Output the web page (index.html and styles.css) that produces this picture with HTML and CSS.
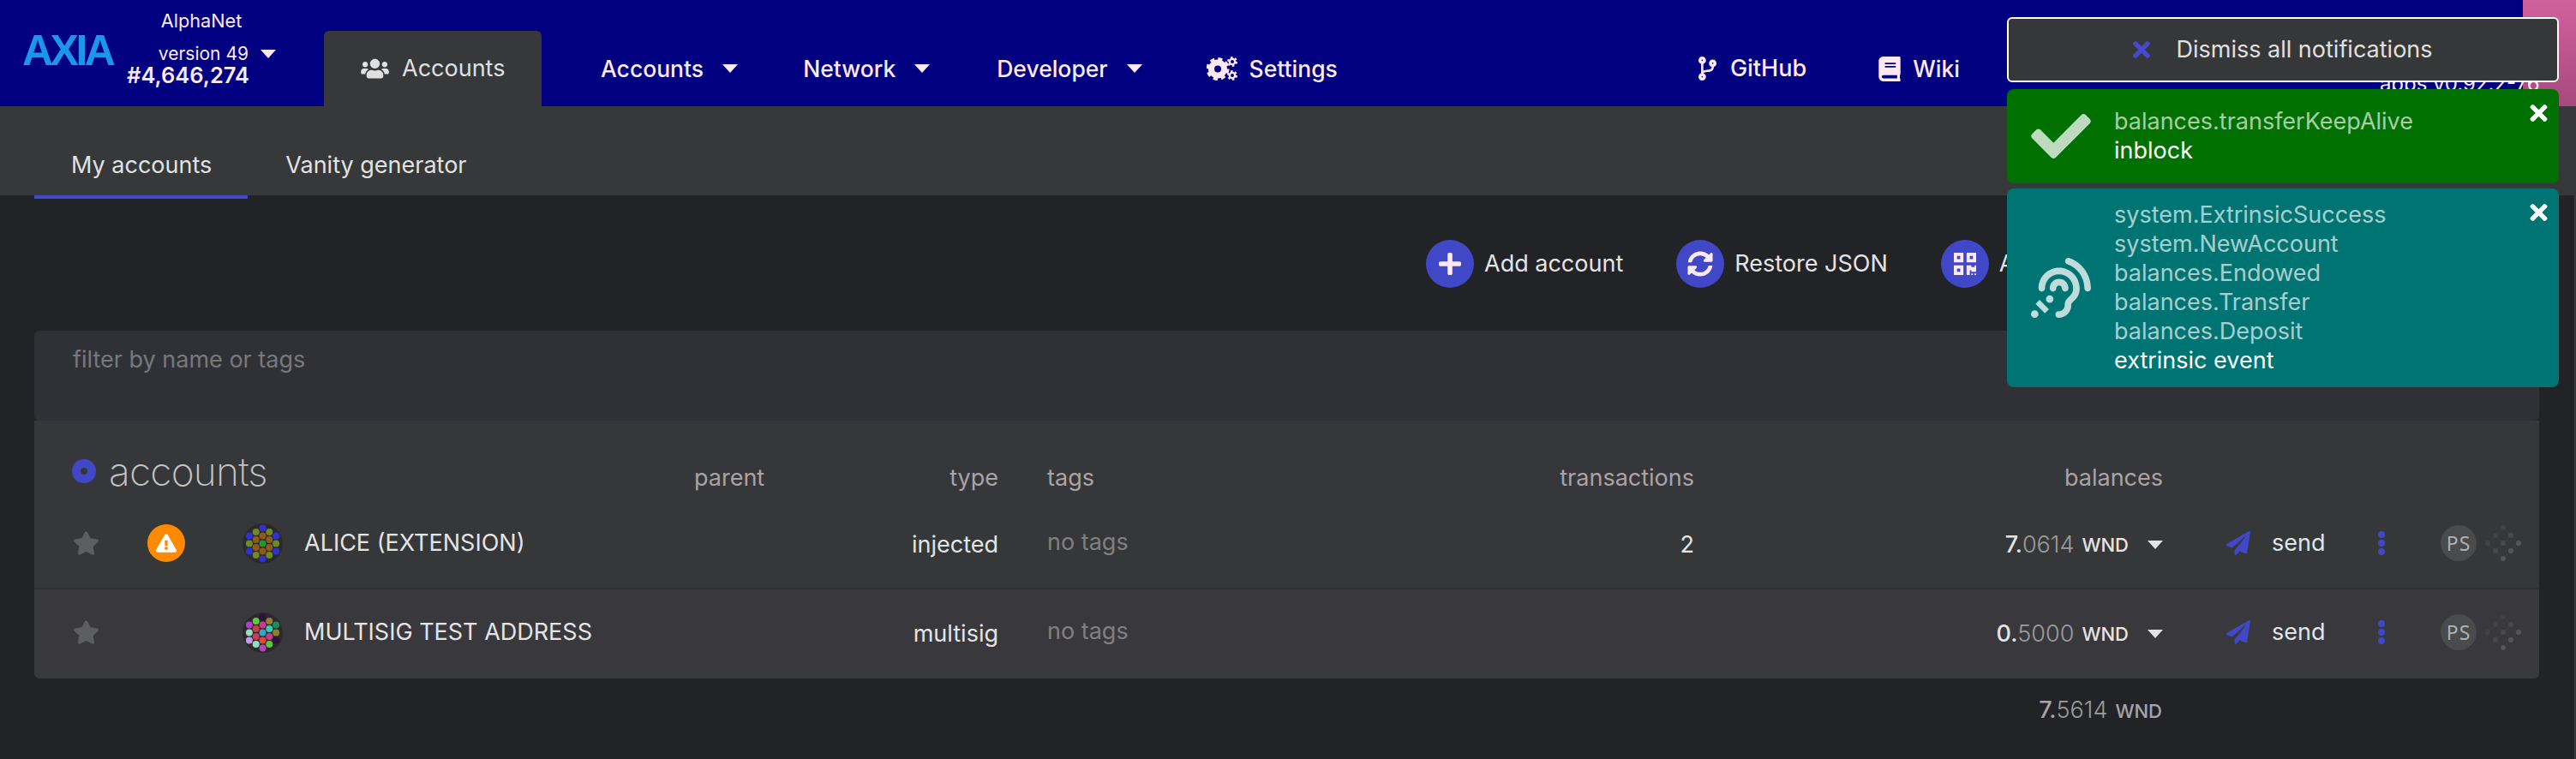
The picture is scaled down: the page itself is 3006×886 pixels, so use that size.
FILE: index.html
```html
<!DOCTYPE html>
<html lang="en">
<head>
    <meta charset="UTF-8">
    <title>Accounts</title>
    <link rel="stylesheet" href="styles.css">
</head>
<body>
    <div class="header">
        <div class="logo">AXIA</div>
        <div class="chain">
            <div class="chain-name">AlphaNet</div>
            <div class="chain-version">version 49 <span class="caret caret-chain"></span></div>
            <div class="chain-block">#4,646,274</div>
        </div>
        <div class="nav">
            <div class="nav-tab">
                <svg class="icon-users" viewBox="0 0 640 512"><path d="M96 224c35.3 0 64-28.7 64-64s-28.7-64-64-64-64 28.7-64 64 28.7 64 64 64zm448 0c35.3 0 64-28.7 64-64s-28.7-64-64-64-64 28.7-64 64 28.7 64 64 64zm32 32h-64c-17.6 0-33.5 7.1-45.1 18.6 40.3 22.1 68.9 62 75.1 109.4h66c17.7 0 32-14.3 32-32v-32c0-35.3-28.7-64-64-64zm-256 0c61.9 0 112-50.1 112-112S381.9 32 320 32 208 82.1 208 144s50.1 112 112 112zm76.8 32h-8.3c-20.8 10-43.9 16-68.5 16s-47.6-6-68.5-16h-8.3C179.6 288 128 339.6 128 403.2V432c0 26.5 21.5 48 48 48h288c26.5 0 48-21.5 48-48v-28.8c0-63.6-51.6-115.2-115.2-115.2zm-223.7-13.4C161.5 263.1 145.6 256 128 256H64c-35.3 0-64 28.7-64 64v32c0 17.7 14.3 32 32 32h65.9c6.3-47.4 34.9-87.3 75.2-109.4z"/></svg>
                Accounts
            </div>
            <div class="nav-item nav-first">Accounts <span class="caret"></span></div>
            <div class="nav-item">Network <span class="caret"></span></div>
            <div class="nav-item nav-developer">Developer <span class="caret"></span></div>
            <div class="nav-item nav-settings">
                <svg class="icon-cogs" viewBox="0 0 36 28">
                    <circle class="cog-body" cx="13" cy="14.5" r="7.5"/>
                    <circle class="cog-teeth" cx="13" cy="14.5" r="11.5"/>
                    <circle class="cog-small" cx="30" cy="6" r="3.2"/>
                    <circle class="cog-small-teeth" cx="30" cy="6" r="5"/>
                    <circle class="cog-small" cx="30" cy="22" r="3.2"/>
                    <circle class="cog-small-teeth" cx="30" cy="22" r="5"/>
                </svg>
                Settings
            </div>
            <div class="nav-item nav-github">
                <svg class="icon-branch" viewBox="0 0 384 512"><path d="M384 144c0-44.2-35.8-80-80-80s-80 35.8-80 80c0 36.4 24.3 67.1 57.5 76.8-.6 16.1-4.2 28.5-11 36.9-15.4 19.2-49.3 22.4-85.2 25.7-28.2 2.6-57.4 5.4-81.3 16.9v-144c32.5-10.2 56-40.5 56-76.3 0-44.2-35.8-80-80-80S0 35.8 0 80c0 35.8 23.5 66.1 56 76.3v199.3C23.5 365.9 0 396.2 0 432c0 44.2 35.8 80 80 80s80-35.8 80-80c0-34-21.2-63.1-51.2-74.6 3.1-5.2 7.8-9.8 14.9-13.4 16.2-8.2 40.4-10.4 66.1-12.8 42.2-3.9 90-8.4 118.2-43.4 14-17.4 21.1-39.8 21.6-67.9 31.6-10.8 54.4-40.7 54.4-75.9zM80 64c8.8 0 16 7.2 16 16s-7.2 16-16 16-16-7.2-16-16 7.2-16 16-16zm0 384c-8.8 0-16-7.2-16-16s7.2-16 16-16 16 7.2 16 16-7.2 16-16 16zm224-320c8.8 0 16 7.2 16 16s-7.2 16-16 16-16-7.2-16-16 7.2-16 16-16z"/></svg>
                GitHub
            </div>
            <div class="nav-item nav-wiki">
                <svg class="icon-book" viewBox="0 0 448 512"><path d="M448 360V24c0-13.3-10.7-24-24-24H96C43 0 0 43 0 96v320c0 53 43 96 96 96h328c13.3 0 24-10.7 24-24v-16c0-7.5-3.5-14.3-8.9-18.7-4.2-15.4-4.2-59.3 0-74.7 5.4-4.3 8.9-11.1 8.9-18.6zM128 134c0-3.3 2.7-6 6-6h212c3.3 0 6 2.7 6 6v20c0 3.3-2.7 6-6 6H134c-3.3 0-6-2.7-6-6v-20zm0 64c0-3.3 2.7-6 6-6h212c3.3 0 6 2.7 6 6v20c0 3.3-2.7 6-6 6H134c-3.3 0-6-2.7-6-6v-20zm253.4 250H96c-17.7 0-32-14.3-32-32 0-17.6 14.4-32 32-32h285.4c-1.9 17.1-1.9 46.9 0 64z"/></svg>
                Wiki
            </div>
            <div class="app-version">apps v0.92.2-76</div>
        </div>
        <div class="header-corner"></div>
    </div>

    <div class="subnav">
        <div class="subnav-tab subnav-active">My accounts</div>
        <div class="subnav-tab">Vanity generator</div>
    </div>

    <div class="content">
        <div class="actions">
            <div class="action">
                <span class="action-circle"><svg class="icon-plus" viewBox="0 0 448 512"><path d="M416 208H272V64c0-17.67-14.33-32-32-32h-32c-17.67 0-32 14.33-32 32v144H32c-17.67 0-32 14.33-32 32v32c0 17.67 14.33 32 32 32h144v144c0 17.67 14.33 32 32 32h32c17.67 0 32-14.33 32-32V304h144c17.67 0 32-14.33 32-32v-32c0-17.67-14.33-32-32-32z"/></svg></span>
                Add account
            </div>
            <div class="action">
                <span class="action-circle"><svg class="icon-sync" viewBox="0 0 512 512"><path d="M370.72 133.28C339.458 104.008 298.888 87.962 255.848 88c-77.458.068-144.328 53.178-162.791 126.85-1.344 5.363-6.122 9.15-11.651 9.15H24.103c-7.498 0-13.194-6.807-11.807-14.176C33.933 94.924 134.813 8 256 8c66.448 0 126.791 26.136 171.315 68.685L463.03 40.97C478.149 25.851 504 36.559 504 57.941V192c0 13.255-10.745 24-24 24H345.941c-21.382 0-32.09-25.851-16.971-40.971l41.75-41.749zM32 296h134.059c21.382 0 32.09 25.851 16.971 40.971l-41.75 41.75c31.262 29.273 71.835 45.319 114.876 45.28 77.418-.07 144.315-53.144 162.787-126.849 1.344-5.363 6.122-9.15 11.651-9.15h57.304c7.498 0 13.194 6.807 11.807 14.176C478.067 417.076 377.187 504 256 504c-66.448 0-126.791-26.136-171.315-68.685L48.97 471.03C33.851 486.149 8 475.441 8 454.059V320c0-13.255 10.745-24 24-24z"/></svg></span>
                Restore JSON
            </div>
            <div class="action">
                <span class="action-circle"><svg class="icon-qr" viewBox="0 0 448 512"><path d="M0 224h192V32H0v192zM64 96h64v64H64V96zm192-64v192h192V32H256zm128 128h-64V96h64v64zM0 480h192V288H0v192zm64-128h64v64H64v-64zm352-64h32v128h-96v-32h-32v96h-64V288h96v32h64v-32zm0 160h32v32h-32v-32zm-64 0h32v32h-32v-32z"/></svg></span>
                Add via Qr
            </div>
        </div>

        <div class="filter">filter by name or tags</div>

        <div class="table">
            <div class="row row-head">
                <div class="head-title"><span class="head-ring"></span>accounts</div>
                <div class="col-parent">parent</div>
                <div class="col-type">type</div>
                <div class="col-tags">tags</div>
                <div class="col-tx">transactions</div>
                <div class="col-balance">balances</div>
            </div>

            <div class="row row-account">
                <div class="col-star"><svg class="icon-star" viewBox="0 0 576 512"><path d="M259.3 17.8L194 150.2 47.9 171.5c-26.2 3.8-36.7 36.1-17.7 54.6l105.7 103-25 145.5c-4.5 26.3 23.2 46 46.4 33.7L288 439.6l130.7 68.7c23.2 12.2 50.9-7.4 46.4-33.7l-25-145.5 105.7-103c19-18.5 8.5-50.8-17.7-54.6L382 150.2 316.7 17.8c-11.7-23.6-45.6-23.9-57.4 0z"/></svg></div>
                <div class="col-warn">
                    <span class="warn-badge"><svg class="icon-warn" viewBox="0 0 576 512"><path d="M569.517 440.013C587.975 472.007 564.806 512 527.94 512H48.054c-36.937 0-59.999-40.055-41.577-71.987L246.423 23.985c18.467-32.009 64.72-31.951 83.154 0l239.94 416.028zM288 354c-25.405 0-46 20.595-46 46s20.595 46 46 46 46-20.595 46-46-20.595-46-46-46zm-43.673-165.346l7.418 136c.347 6.364 5.609 11.346 11.982 11.346h48.546c6.373 0 11.635-4.982 11.982-11.346l7.418-136c.375-6.874-5.098-12.654-11.982-12.654h-63.383c-6.884 0-12.356 5.78-11.981 12.654z"/></svg></span>
                </div>
                <div class="col-name">
                    <svg class="identicon" viewBox="-23.5 -23.5 47 47">
                        <circle class="identicon-bg" r="23.5"/>
                        <circle cx="0" cy="-18" r="4" fill="#3030d8"/>
                        <circle cx="-7.8" cy="-13.5" r="4" fill="#6f8a1e"/>
                        <circle cx="7.8" cy="-13.5" r="4" fill="#6f8a1e"/>
                        <circle cx="-15.6" cy="-9" r="4" fill="#3030d8"/>
                        <circle cx="0" cy="-9" r="4" fill="#8f5a1c"/>
                        <circle cx="15.6" cy="-9" r="4" fill="#3030d8"/>
                        <circle cx="-7.8" cy="-4.5" r="4" fill="#8f5a1c"/>
                        <circle cx="7.8" cy="-4.5" r="4" fill="#8f5a1c"/>
                        <circle cx="-15.6" cy="0" r="4" fill="#6f8a1e"/>
                        <circle cx="0" cy="0" r="4" fill="#1f9a1e"/>
                        <circle cx="15.6" cy="0" r="4" fill="#6f8a1e"/>
                        <circle cx="-7.8" cy="4.5" r="4" fill="#8f5a1c"/>
                        <circle cx="7.8" cy="4.5" r="4" fill="#8f5a1c"/>
                        <circle cx="-15.6" cy="9" r="4" fill="#3030d8"/>
                        <circle cx="0" cy="9" r="4" fill="#8f5a1c"/>
                        <circle cx="15.6" cy="9" r="4" fill="#3030d8"/>
                        <circle cx="-7.8" cy="13.5" r="4" fill="#6f8a1e"/>
                        <circle cx="7.8" cy="13.5" r="4" fill="#6f8a1e"/>
                        <circle cx="0" cy="18" r="4" fill="#3030d8"/>
                    </svg>
                    ALICE (EXTENSION)
                </div>
                <div class="col-parent"></div>
                <div class="col-type">injected</div>
                <div class="col-tags no-tags">no tags</div>
                <div class="col-tx">2</div>
                <div class="col-balance">
                    <span class="bal-int">7.</span><span class="bal-dec">0614</span><span class="bal-unit">WND</span><span class="caret caret-bal"></span>
                </div>
                <div class="col-send">
                    <svg class="icon-send" viewBox="0 0 512 512"><path d="M476 3.2L12.5 270.6c-18.1 10.4-15.8 35.6 2.2 43.2L121 358.4l287.3-253.2c5.5-4.9 13.3 2.6 8.6 8.3L176 407v80.5c0 23.6 28.5 32.9 42.5 15.8L282 426l124.6 52.2c14.2 6 30.4-2.9 33-18.2l72-432C515 7.8 493.3-6.8 476 3.2z"/></svg>
                    send
                </div>
                <div class="col-more"><span></span><span></span><span></span></div>
                <div class="col-end">
                    <span class="ps-badge">PS</span>
                    <svg class="diamond" viewBox="-22 -22 44 44">
                        <path d="M0-18L18 0M-9-9L9 9M-18 0L0 18M0-18L-18 0M9-9L-9 9M18 0L0 18"/>
                        <circle cx="0" cy="-18" r="3" class="dim"/>
                        <circle cx="-9" cy="-9" r="3" class="dim"/>
                        <circle cx="9" cy="-9" r="3"/>
                        <circle cx="-18" cy="0" r="3" class="dim"/>
                        <circle cx="0" cy="0" r="3"/>
                        <circle cx="18" cy="0" r="3" class="lit"/>
                        <circle cx="-9" cy="9" r="3"/>
                        <circle cx="9" cy="9" r="3" class="lit"/>
                        <circle cx="0" cy="18" r="3" class="lit"/>
                    </svg>
                </div>
            </div>

            <div class="row row-account row-alt">
                <div class="col-star"><svg class="icon-star" viewBox="0 0 576 512"><path d="M259.3 17.8L194 150.2 47.9 171.5c-26.2 3.8-36.7 36.1-17.7 54.6l105.7 103-25 145.5c-4.5 26.3 23.2 46 46.4 33.7L288 439.6l130.7 68.7c23.2 12.2 50.9-7.4 46.4-33.7l-25-145.5 105.7-103c19-18.5 8.5-50.8-17.7-54.6L382 150.2 316.7 17.8c-11.7-23.6-45.6-23.9-57.4 0z"/></svg></div>
                <div class="col-warn"></div>
                <div class="col-name">
                    <svg class="identicon" viewBox="-23.5 -23.5 47 47">
                        <circle class="identicon-bg" r="23.5"/>
                        <circle cx="0" cy="-18" r="4" fill="#2e0f3e"/>
                        <circle cx="-7.8" cy="-13.5" r="4" fill="#55d03a"/>
                        <circle cx="7.8" cy="-13.5" r="4" fill="#94802a"/>
                        <circle cx="-15.6" cy="-9" r="4" fill="#b33cc8"/>
                        <circle cx="0" cy="-9" r="4" fill="#c93a90"/>
                        <circle cx="15.6" cy="-9" r="4" fill="#1f8a5c"/>
                        <circle cx="-7.8" cy="-4.5" r="4" fill="#d03c3c"/>
                        <circle cx="7.8" cy="-4.5" r="4" fill="#2fd0b8"/>
                        <circle cx="-15.6" cy="0" r="4" fill="#8fe0c0"/>
                        <circle cx="0" cy="0" r="4" fill="#2ea8c8"/>
                        <circle cx="15.6" cy="0" r="4" fill="#8f7f2a"/>
                        <circle cx="-7.8" cy="4.5" r="4" fill="#d03860"/>
                        <circle cx="7.8" cy="4.5" r="4" fill="#c93a90"/>
                        <circle cx="-15.6" cy="9" r="4" fill="#c898e0"/>
                        <circle cx="0" cy="9" r="4" fill="#d84a3a"/>
                        <circle cx="15.6" cy="9" r="4" fill="#2e0f3e"/>
                        <circle cx="-7.8" cy="13.5" r="4" fill="#8fe0c0"/>
                        <circle cx="7.8" cy="13.5" r="4" fill="#50d030"/>
                        <circle cx="0" cy="18" r="4" fill="#c03cc8"/>
                    </svg>
                    MULTISIG TEST ADDRESS
                </div>
                <div class="col-parent"></div>
                <div class="col-type">multisig</div>
                <div class="col-tags no-tags">no tags</div>
                <div class="col-tx"></div>
                <div class="col-balance">
                    <span class="bal-int">0.</span><span class="bal-dec">5000</span><span class="bal-unit">WND</span><span class="caret caret-bal"></span>
                </div>
                <div class="col-send">
                    <svg class="icon-send" viewBox="0 0 512 512"><path d="M476 3.2L12.5 270.6c-18.1 10.4-15.8 35.6 2.2 43.2L121 358.4l287.3-253.2c5.5-4.9 13.3 2.6 8.6 8.3L176 407v80.5c0 23.6 28.5 32.9 42.5 15.8L282 426l124.6 52.2c14.2 6 30.4-2.9 33-18.2l72-432C515 7.8 493.3-6.8 476 3.2z"/></svg>
                    send
                </div>
                <div class="col-more"><span></span><span></span><span></span></div>
                <div class="col-end">
                    <span class="ps-badge">PS</span>
                    <svg class="diamond" viewBox="-22 -22 44 44">
                        <path d="M0-18L18 0M-9-9L9 9M-18 0L0 18M0-18L-18 0M9-9L-9 9M18 0L0 18"/>
                        <circle cx="0" cy="-18" r="3" class="dim"/>
                        <circle cx="-9" cy="-9" r="3" class="dim"/>
                        <circle cx="9" cy="-9" r="3"/>
                        <circle cx="-18" cy="0" r="3" class="dim"/>
                        <circle cx="0" cy="0" r="3"/>
                        <circle cx="18" cy="0" r="3" class="lit"/>
                        <circle cx="-9" cy="9" r="3"/>
                        <circle cx="9" cy="9" r="3" class="lit"/>
                        <circle cx="0" cy="18" r="3" class="lit"/>
                    </svg>
                </div>
            </div>
        </div>

        <div class="total">
            <span class="bal-int">7.</span><span class="bal-dec">5614</span><span class="bal-unit">WND</span>
        </div>
    </div>

    <div class="notifications">
        <div class="dismiss">
            <svg class="icon-dismiss" viewBox="0 80 352 352"><path d="M242.72 256l100.07-100.07c12.28-12.28 12.28-32.19 0-44.48l-22.24-22.24c-12.28-12.28-32.19-12.28-44.48 0L176 189.28 75.93 89.21c-12.28-12.28-32.19-12.28-44.48 0L9.21 111.45c-12.28 12.28-12.28 32.19 0 44.48L109.28 256 9.21 356.07c-12.28 12.28-12.28 32.19 0 44.48l22.24 22.24c12.28 12.28 32.2 12.28 44.48 0L176 322.72l100.07 100.07c12.28 12.28 32.2 12.28 44.48 0l22.24-22.24c12.28-12.28 12.28-32.19 0-44.48L242.72 256z"/></svg>
            Dismiss all notifications
        </div>
        <div class="notice notice-green">
            <svg class="notice-icon" viewBox="0 50 512 412"><path d="M173.898 439.404l-166.4-166.4c-9.997-9.997-9.997-26.206 0-36.204l36.203-36.204c9.997-9.998 26.207-9.998 36.204 0L192 312.69 432.095 72.596c9.997-9.997 26.207-9.997 36.204 0l36.203 36.204c9.997 9.997 9.997 26.206 0 36.204l-294.4 294.401c-9.998 9.997-26.207 9.997-36.204-.001z"/></svg>
            <div class="notice-text">
                <div class="notice-line">balances.transferKeepAlive</div>
                <div>inblock</div>
            </div>
            <svg class="notice-close" viewBox="0 80 352 352"><path d="M242.72 256l100.07-100.07c12.28-12.28 12.28-32.19 0-44.48l-22.24-22.24c-12.28-12.28-32.19-12.28-44.48 0L176 189.28 75.93 89.21c-12.28-12.28-32.19-12.28-44.48 0L9.21 111.45c-12.28 12.28-12.28 32.19 0 44.48L109.28 256 9.21 356.07c-12.28 12.28-12.28 32.19 0 44.48l22.24 22.24c12.28 12.28 32.2 12.28 44.48 0L176 322.72l100.07 100.07c12.28 12.28 32.2 12.28 44.48 0l22.24-22.24c12.28-12.28 12.28-32.19 0-44.48L242.72 256z"/></svg>
        </div>
        <div class="notice notice-teal">
            <svg class="notice-icon" viewBox="0 0 512 512"><path d="M216 260c0 15.464-12.536 28-28 28s-28-12.536-28-28c0-44.112 35.888-80 80-80s80 35.888 80 80c0 15.464-12.536 28-28 28s-28-12.536-28-28c0-13.234-10.767-24-24-24s-24 10.766-24 24zm24-176c-97.047 0-176 78.953-176 176 0 15.464 12.536 28 28 28s28-12.536 28-28c0-66.168 53.832-120 120-120s120 53.832 120 120c0 75.164-71.009 70.311-71.997 143.622L288 404c0 28.673-23.327 52-52 52-15.464 0-28 12.536-28 28s12.536 28 28 28c59.475 0 107.876-48.328 108-107.774.595-34.428 72-48.24 72-144.226 0-97.047-78.953-176-176-176zm-80 236c-17.673 0-32 14.327-32 32s14.327 32 32 32 32-14.327 32-32-14.327-32-32-32zM32 448c-17.673 0-32 14.327-32 32s14.327 32 32 32 32-14.327 32-32-14.327-32-32-32zm480-187.993c0-1.518-.012-3.025-.045-4.531C510.076 140.525 436.157 38.47 327.994 1.511c-14.633-4.998-30.549 2.809-35.55 17.442-5 14.633 2.81 30.549 17.442 35.55 85.906 29.354 144.61 110.513 146.077 201.953.016.782.037 1.799.037 2.542 0 15.464 12.536 28 28 28s28-12.536 28-28zM152.971 439.029l-80-80L39.03 392.97l80 80 33.941-33.941z"/></svg>
            <div class="notice-text">
                <div class="notice-line">system.ExtrinsicSuccess</div>
                <div class="notice-line">system.NewAccount</div>
                <div class="notice-line">balances.Endowed</div>
                <div class="notice-line">balances.Transfer</div>
                <div class="notice-line">balances.Deposit</div>
                <div>extrinsic event</div>
            </div>
            <svg class="notice-close" viewBox="0 80 352 352"><path d="M242.72 256l100.07-100.07c12.28-12.28 12.28-32.19 0-44.48l-22.24-22.24c-12.28-12.28-32.19-12.28-44.48 0L176 189.28 75.93 89.21c-12.28-12.28-32.19-12.28-44.48 0L9.21 111.45c-12.28 12.28-12.28 32.19 0 44.48L109.28 256 9.21 356.07c-12.28 12.28-12.28 32.19 0 44.48l22.24 22.24c12.28 12.28 32.2 12.28 44.48 0L176 322.72l100.07 100.07c12.28 12.28 32.2 12.28 44.48 0l22.24-22.24c12.28-12.28 12.28-32.19 0-44.48L242.72 256z"/></svg>
        </div>
    </div>
</body>
</html>
```

FILE: styles.css
```css
* {
    margin: 0;
    padding: 0;
    box-sizing: border-box;
}
body {
    font-family: Inter, "Liberation Sans", sans-serif;
    font-size: 27px;
    line-height: 34px;
    background: #222327;
    color: #e4e4e4;
    width: 3006px;
    height: 886px;
    overflow: hidden;
    position: relative;
}
svg {
    fill: currentColor;
    flex: none;
    display: block;
}
.caret {
    display: inline-block;
    flex: none;
    width: 0;
    height: 0;
    border-left: 9px solid transparent;
    border-right: 9px solid transparent;
    border-top: 10px solid currentColor;
}

/* header */
.header {
    height: 124px;
    background: #000080;
    color: #fde9f3;
    display: flex;
    position: relative;
}
.logo {
    margin: 34px 0 0 26px;
    width: 122px;
    font-family: "Liberation Sans", sans-serif;
    font-weight: bold;
    font-size: 50px;
    line-height: 50px;
    letter-spacing: -3.5px;
    color: #1a97ec;
}
.chain {
    width: 174px;
    padding-top: 7px;
    display: flex;
    flex-direction: column;
}
.chain-name {
    text-align: center;
    font-size: 21.7px;
}
.chain-version {
    margin-top: 5px;
    font-size: 21px;
    display: flex;
    justify-content: flex-end;
    align-items: center;
    gap: 14px;
}
.chain-block {
    font-size: 25.5px;
    font-weight: 600;
    line-height: 24px;
    margin-top: -4px;
}
.nav {
    margin: 36px 0 0 56px;
    height: 88px;
    display: flex;
    align-items: center;
    white-space: nowrap;
    position: relative;
    z-index: 1;
}
.nav-tab {
    height: 88px;
    width: 254px;
    padding-left: 43px;
    gap: 15px;
    display: flex;
    align-items: center;
    background: #373839;
    color: #e0e0e0;
    border-radius: 6px 6px 0 0;
}
.nav-item {
    margin-left: 76px;
    display: flex;
    align-items: center;
    gap: 22px;
    font-size: 26.5px;
    font-weight: 500;
}
.nav-first {
    margin-left: 69px;
}
.nav-developer {
    margin-left: 78px;
}
.nav-settings {
    margin-left: 75px;
    gap: 14px;
}
.nav-github {
    margin-left: 421px;
    gap: 16px;
    font-size: 27px;
}
.nav-wiki {
    margin-left: 84px;
    gap: 14px;
}
.app-version {
    margin: 36px 0 0 490px;
    font-size: 24px;
}
.header-corner {
    position: absolute;
    top: 0;
    right: 0;
    bottom: 0;
    width: 62px;
    background: linear-gradient(#d2609e, #a64a7e);
}
.icon-users {
    width: 33px;
    height: 26px;
}
.icon-cogs {
    width: 36px;
    height: 28px;
}
.cog-body {
    fill: none;
    stroke: currentColor;
    stroke-width: 7;
}
.cog-teeth {
    fill: none;
    stroke: currentColor;
    stroke-width: 4;
    stroke-dasharray: 5 4.03;
}
.cog-small {
    fill: none;
    stroke: currentColor;
    stroke-width: 2.4;
}
.cog-small-teeth {
    fill: none;
    stroke: currentColor;
    stroke-width: 2;
    stroke-dasharray: 2.5 2.73;
}
.icon-branch {
    width: 21px;
    height: 28px;
}
.icon-book {
    width: 26px;
    height: 29px;
}

/* sub navigation */
.subnav {
    height: 104px;
    padding-left: 40px;
    background: #373839;
    display: flex;
    align-items: flex-end;
}
.subnav-tab {
    padding: 0 44px 18px;
    color: #e2e2e2;
}
.subnav-active {
    padding-left: 43px;
    padding-right: 42px;
    position: relative;
}
.subnav-active::after {
    content: "";
    position: absolute;
    left: 0;
    right: 0;
    top: 100%;
    height: 4px;
    background: #4049ca;
}

/* page body */
.content {
    margin-right: 2px;
    padding-right: 41px;
    padding-left: 40px;
    height: 658px;
    box-shadow: 2px 0 0 #3a3b3c;
}
.actions {
    height: 158px;
    padding: 52px 0 0 1624px;
    display: flex;
    gap: 62px;
    white-space: nowrap;
}
.action {
    display: flex;
    align-items: center;
    gap: 12px;
    height: 56px;
}
.action-circle {
    width: 56px;
    height: 56px;
    border-radius: 50%;
    background: #4048c8;
    color: #fde9f3;
    display: flex;
    align-items: center;
    justify-content: center;
}
.icon-plus {
    width: 26px;
    height: 30px;
}
.icon-sync {
    width: 30px;
    height: 30px;
}
.icon-qr {
    width: 26px;
    height: 30px;
}
.filter {
    height: 105px;
    padding: 17px 0 0 45px;
    background: #303136;
    border-radius: 6px;
    color: #78787c;
}
.table {
    background: #36373a;
    border-radius: 0 0 6px 6px;
    overflow: hidden;
}
.row {
    display: grid;
    grid-template-columns: 132px 111px 527px 190px 165px 635px 177px 547px 251px 73px 115px;
    align-items: center;
}
.row-head {
    height: 93px;
    align-items: end;
    padding-bottom: 9px;
    color: #aba3a5;
}
.row-account {
    height: 104px;
    padding-bottom: 2px;
    background: #363738;
    border-bottom: 2px solid #2e2f2f;
}
.row-alt {
    background: #39383c;
    border-bottom: 0;
    padding-bottom: 4px;
}
.head-title {
    grid-column: 1 / span 3;
    padding-left: 44px;
    display: flex;
    align-items: center;
    gap: 15px;
    font-size: 46px;
    font-weight: 200;
    line-height: 50px;
    letter-spacing: -0.8px;
    color: #c4c4c4;
}
.head-ring {
    width: 28px;
    height: 28px;
    border: 10px solid #4048c8;
    border-radius: 50%;
}
.col-star {
    padding-left: 45px;
    color: #5d5e61;
}
.icon-star {
    width: 31px;
    height: 28px;
}
.warn-badge {
    width: 44px;
    height: 44px;
    border-radius: 50%;
    background: #ff8a00;
    color: #fff;
    display: flex;
    align-items: center;
    justify-content: center;
}
.icon-warn {
    width: 24px;
    height: 22px;
}
.col-name {
    display: flex;
    align-items: center;
    gap: 25px;
    white-space: nowrap;
}
.identicon {
    width: 47px;
    height: 47px;
}
.identicon-bg {
    fill: #2a2a2c;
}
.col-type {
    text-align: right;
}
.row-account .col-type {
    padding-top: 4px;
}
.col-tags {
    padding-left: 57px;
}
.no-tags {
    color: #808082;
    padding-bottom: 2px;
}
.col-tx {
    text-align: right;
    padding-top: 4px;
}
.col-balance {
    text-align: right;
    white-space: nowrap;
}
.row-account .col-balance {
    display: flex;
    justify-content: flex-end;
    align-items: center;
    padding-top: 4px;
}
.bal-int {
    font-weight: 500;
}
.bal-dec {
    font-weight: 300;
    color: #9c9c9c;
}
.bal-unit {
    margin-left: 9px;
    font-size: 22px;
    font-weight: 500;
}
.caret-bal {
    margin-left: 22px;
}
.col-send {
    padding-left: 74px;
    display: flex;
    align-items: center;
    gap: 25px;
}
.icon-send {
    width: 28px;
    height: 28px;
    color: #4048c8;
}
.col-more {
    display: flex;
    flex-direction: column;
    gap: 2px;
}
.col-more span {
    width: 8px;
    height: 8px;
    border-radius: 50%;
    background: #4048c8;
}
.col-end {
    display: flex;
    align-items: center;
    gap: 9px;
}
.ps-badge {
    width: 42px;
    height: 42px;
    border-radius: 50%;
    background: #4a4b4c;
    color: #b0b0b0;
    font-family: "Noto Sans", sans-serif;
    font-size: 23px;
    letter-spacing: 1px;
    line-height: 42px;
    text-align: center;
}
.diamond {
    width: 44px;
    height: 44px;
}
.diamond path {
    fill: none;
    stroke: #3e3f40;
    stroke-width: 1;
}
.diamond circle {
    fill: #48494a;
}
.diamond .dim {
    fill: #414243;
}
.diamond .lit {
    fill: #555657;
}
.total {
    padding: 20px 440px 0 0;
    text-align: right;
    color: #aba3a5;
}

/* notifications */
.notifications {
    position: absolute;
    top: 20px;
    right: 20px;
    width: 644px;
    display: flex;
    flex-direction: column;
    z-index: 5;
}
.dismiss {
    height: 76px;
    border: 2px solid #fff;
    border-radius: 6px;
    background: #363738;
    color: #e0e0e0;
    display: flex;
    align-items: center;
    justify-content: center;
    gap: 30px;
    margin-bottom: 8px;
}
.icon-dismiss {
    width: 20px;
    height: 20px;
    color: #4848d0;
}
.notice {
    border-radius: 8px;
    color: #fff;
    display: flex;
    align-items: center;
    gap: 27px;
    padding-left: 28px;
    position: relative;
}
.notice-green {
    height: 110px;
    background: #007000;
    margin-bottom: 6px;
}
.notice-teal {
    height: 232px;
    background: #007373;
}
.notice-icon {
    width: 70px;
    height: 70px;
    opacity: 0.75;
}
.notice-green .notice-icon {
    height: 56px;
}
.notice-line {
    opacity: 0.65;
}
.notice-close {
    position: absolute;
    top: 18px;
    right: 13px;
    width: 21px;
    height: 20px;
}
```
